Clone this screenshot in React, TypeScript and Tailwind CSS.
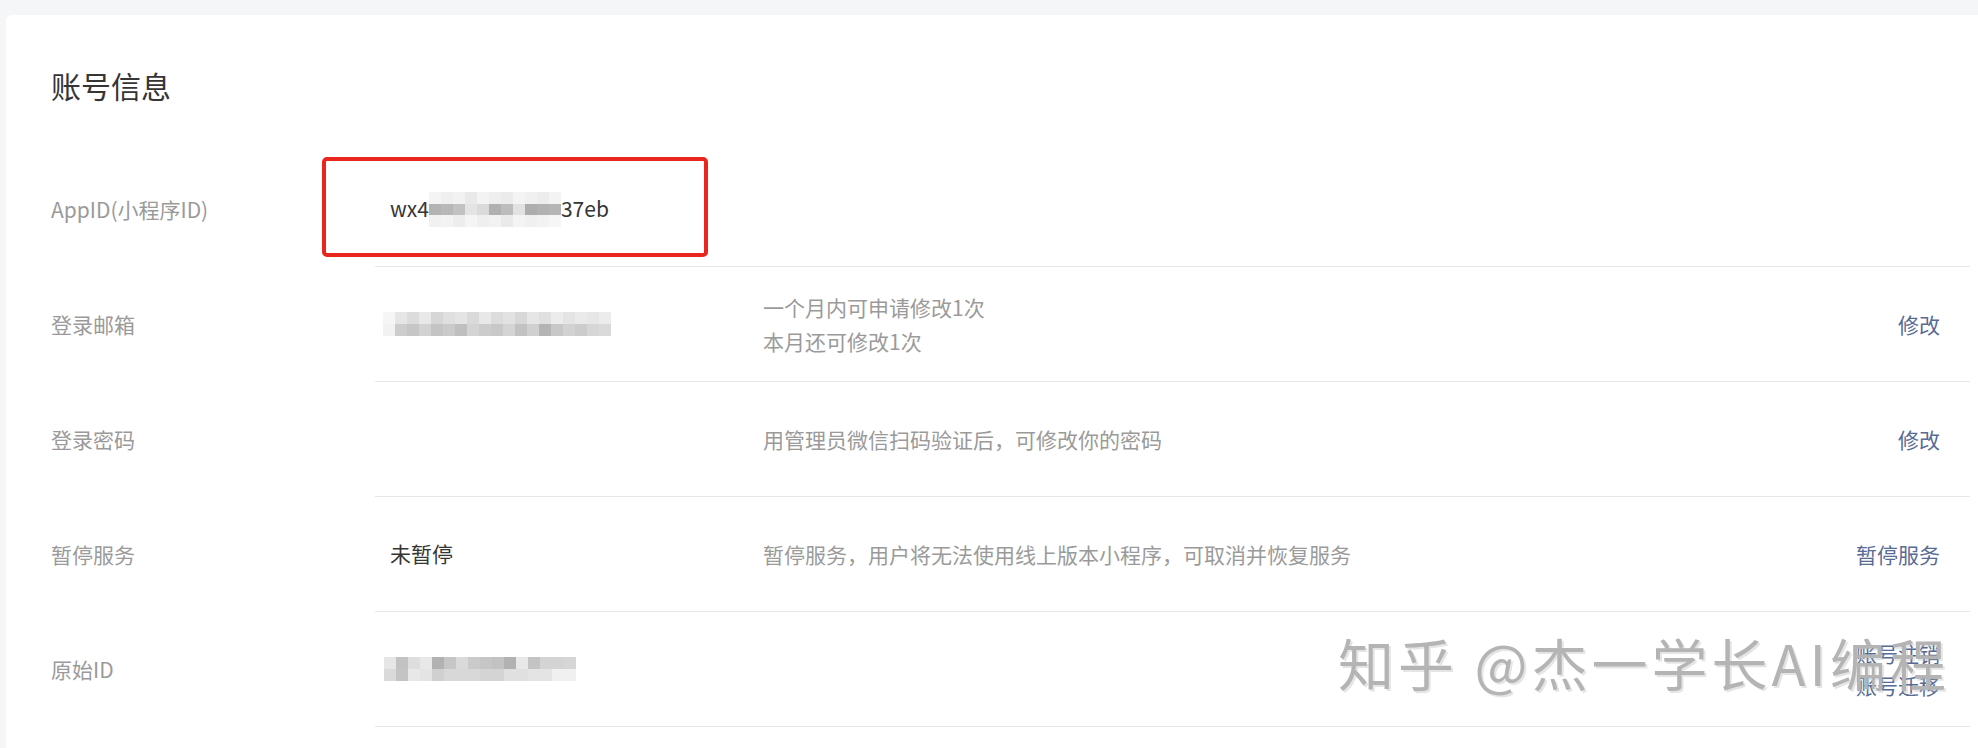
const font = { fontFamily: '"Noto Sans CJK SC", "Noto Sans", sans-serif' };

type Cells = string[][];

// pixelated (mosaic) masks that hide private values in the screenshot
function Mosaic({ rows, cell, heights }: { rows: Cells; cell: number; heights: number[] }) {
  return (
    <div className="flex flex-col">
      {rows.map((r, i) => (
        <div key={i} className="flex">
          {r.map((c, j) => (
            <div key={j} style={{ width: cell, height: heights[i], background: c }} />
          ))}
        </div>
      ))}
    </div>
  );
}

const appIdMask: Cells = [
  ["#f4f4f4", "#efefef", "#f2f2f2", "#e9e9e9", "#f3f3f3", "#eeeeee", "#ebebeb", "#f4f4f4", "#f0f0f0", "#ececec", "#f3f3f3"],
  ["#b3b3b3", "#b8b8b8", "#c2c2c2", "#e4e4e4", "#dadada", "#b0b0b0", "#bcbcbc", "#e2e2e2", "#adadad", "#b1b1b1", "#b5b5b5"],
  ["#f1f1f1", "#f3f3f3", "#ededed", "#f5f5f5", "#efefef", "#f2f2f2", "#eaeaea", "#f4f4f4", "#f0f0f0", "#f2f2f2", "#f6f6f6"],
];

const emailMask: Cells = [
  ["#f6f6f6", "#e6e6e6", "#dcdcdc", "#e8e8e8", "#d6d6d6", "#dfdfdf", "#e4e4e4", "#dadada", "#e8e8e8", "#dcdcdc", "#e2e2e2", "#d8d8d8", "#e6e6e6", "#e0e0e0", "#ececec", "#e4e4e4", "#eaeaea", "#e6e6e6", "#ececec"],
  ["#f2f2f2", "#cdcdcd", "#c6c6c6", "#d2d2d2", "#c4c4c4", "#cacaca", "#bfbfbf", "#d4d4d4", "#cccccc", "#c8c8c8", "#d4d4d4", "#c2c2c2", "#d0d0d0", "#b4b4b4", "#c8c8c8", "#d2d2d2", "#cccccc", "#d6d6d6", "#dadada"],
];

const rawIdMask: Cells = [
  ["#e6e6e6", "#c2c2c2", "#dedede", "#e8e8e8", "#b2b2b2", "#c6c6c6", "#dadada", "#cacaca", "#c6c6c6", "#c2c2c2", "#b2b2b2", "#e8e8e8", "#c4c4c4", "#d4d4d4", "#d4d4d4", "#d6d6d6"],
  ["#dadada", "#c4c4c4", "#e8e8e8", "#e4e4e4", "#d0d0d0", "#d8d8d8", "#d8d8d8", "#d8d8d8", "#d4d4d4", "#d4d4d4", "#e0e0e0", "#e0e0e0", "#e4e4e4", "#e4e4e4", "#f0f0f0", "#f0f0f0"],
];

function Row({ label, value, desc, links }: { label: string; value?: React.ReactNode; desc?: React.ReactNode; links?: string[] }) {
  return (
    <div className="flex h-[115px]">
      <div className="w-[324px] flex items-center text-[21px] text-[#9a9a9a]">{label}</div>
      <div className="flex-1 flex items-center border-b border-[#e7e7eb] pl-[15px] pr-[30px]">
        <div className="w-[373px] text-[21px] text-[#353535]">{value}</div>
        <div className="flex-1 text-[21px] leading-[34px] text-[#9a9a9a]">{desc}</div>
        {links && (
          <div className="flex flex-col items-end text-[21px] leading-[32px] text-[#576b95]">
            {links.map((l) => (
              <span key={l}>{l}</span>
            ))}
          </div>
        )}
      </div>
    </div>
  );
}

export default function App() {
  return (
    <div className="relative w-[1978px] h-[748px] overflow-hidden bg-[#f5f6f8] pt-[15px] pl-[6px]" style={font}>
      <div className="bg-white rounded-tl-[6px] h-full pl-[45px] pr-[8px]">
        <h1 className="pt-[48px] mb-[44px] text-[30px] leading-[45px] text-[#353535]">账号信息</h1>

        <Row
          label="AppID(小程序ID)"
          value={
            <span className="flex items-center">
              wx4
              <Mosaic rows={appIdMask} cell={12} heights={[12, 11, 12]} />
              37eb
            </span>
          }
        />
        <Row
          label="登录邮箱"
          value={<div className="-ml-[7px]"><Mosaic rows={emailMask} cell={12} heights={[12, 12]} /></div>}
          desc={
            <>
              <div>一个月内可申请修改1次</div>
              <div>本月还可修改1次</div>
            </>
          }
          links={["修改"]}
        />
        <Row label="登录密码" desc="用管理员微信扫码验证后，可修改你的密码" links={["修改"]} />
        <Row label="暂停服务" value="未暂停" desc="暂停服务，用户将无法使用线上版本小程序，可取消并恢复服务" links={["暂停服务"]} />
        <Row
          label="原始ID"
          value={<div className="-ml-[6px]"><Mosaic rows={rawIdMask} cell={12} heights={[12, 12]} /></div>}
          links={["账号注销", "账号迁移"]}
        />
      </div>

      {/* red annotation box */}
      <div className="absolute left-[322px] top-[157px] w-[386px] h-[100px] border-4 border-[#e8261d] rounded-[5px]" />

      {/* watermark */}
      <div
        className="absolute left-[1338px] top-[628px] text-[56px] leading-[68px] tracking-[4px] text-[#b4b4b4] whitespace-nowrap pointer-events-none"
        style={{ textShadow: "2px 2px 0 rgba(170,170,170,0.3)" }}
      >
        知乎 @杰一学长AI编程
      </div>
    </div>
  );
}
